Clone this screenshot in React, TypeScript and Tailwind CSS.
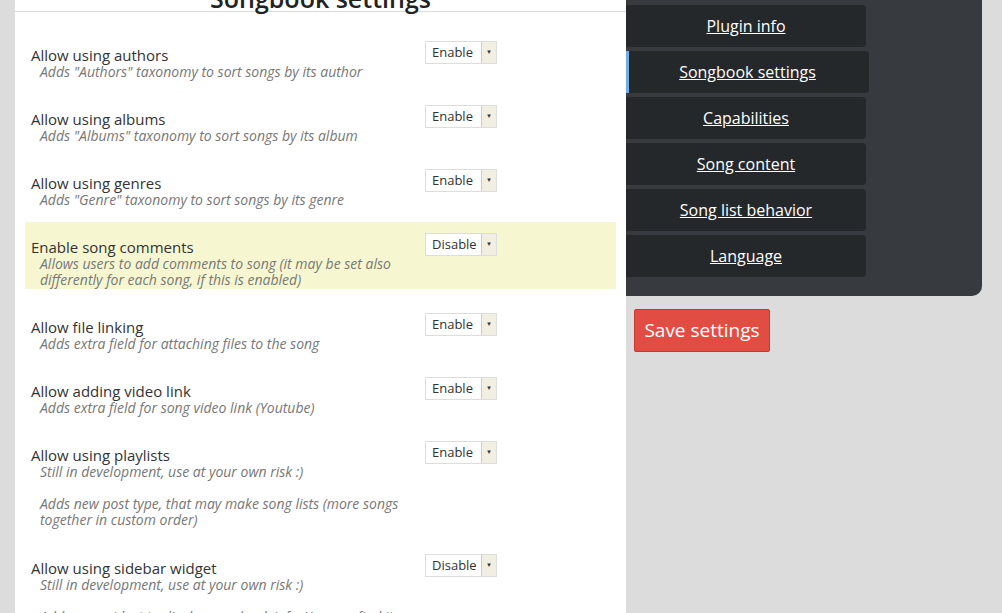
const rows: { title: string; desc: string[]; value: string; hl?: boolean; h: number }[] = [
  { title: "Allow using authors", desc: ['Adds "Authors" taxonomy to sort songs by its author'], value: "Enable", h: 64 },
  { title: "Allow using albums", desc: ['Adds "Albums" taxonomy to sort songs by its album'], value: "Enable", h: 64 },
  { title: "Allow using genres", desc: ['Adds "Genre" taxonomy to sort songs by its genre'], value: "Enable", h: 64 },
  {
    title: "Enable song comments",
    desc: ["Allows users to add comments to song (it may be set also differently for each song, if this is enabled)"],
    value: "Disable",
    hl: true,
    h: 67,
  },
  { title: "Allow file linking", desc: ["Adds extra field for attaching files to the song"], value: "Enable", h: 64 },
  { title: "Allow adding video link", desc: ["Adds extra field for song video link (Youtube)"], value: "Enable", h: 64 },
  {
    title: "Allow using playlists",
    desc: ["Still in development, use at your own risk :)", "Adds new post type, that may make song lists (more songs together in custom order)"],
    value: "Enable",
    h: 113,
  },
  {
    title: "Allow using sidebar widget",
    desc: ["Still in development, use at your own risk :)", "Adds new widget to display songbook info. You can find it"],
    value: "Disable",
    h: 113,
  },
];

const nav = ["Plugin info", "Songbook settings", "Capabilities", "Song content", "Song list behavior", "Language"];

function Select({ value }: { value: string }) {
  return (
    <div className="mt-[-6px] flex h-[23px] w-[72px] border border-[#ddd] bg-white text-[13px] text-[#333]">
      <div className="flex-1 pl-[6px] leading-[21px]">{value}</div>
      <div className="flex w-[15px] items-center justify-center border-l border-[#ccc] bg-[#f1efe2] text-[6px]">▼</div>
    </div>
  );
}

export default function App() {
  return (
    <div className="flex h-[613px] w-[1002px] overflow-hidden bg-[#dcdcdc]" style={{ fontFamily: '"Open Sans", sans-serif' }}>
      <div className="w-[15px] shrink-0" />
      <div className="w-[611px] shrink-0 bg-white">
        <div className="mt-[-14px] border-b border-[#ddd] text-center text-[25px] font-semibold leading-[25px] text-[#222]">
          Songbook settings
        </div>
        <div className="px-[10px] pt-[18px]">
          {rows.map((r) => (
            <div
              key={r.title}
              className={`flex px-[6px] pt-[17px] ${r.hl ? "mb-[13px] bg-[#f6f7d1]" : ""}`}
              style={{ height: r.h }}
            >
              <div className="w-[394px]">
                <div className="text-[15px] leading-[17px] text-[#333]">{r.title}</div>
                {r.desc.map((d, i) => (
                  <div key={i} className={`pl-[9px] text-[14px] italic leading-[16px] text-[#777] ${i > 0 ? "mt-[16px]" : ""}`}>
                    {d}
                  </div>
                ))}
              </div>
              <Select value={r.value} />
            </div>
          ))}
        </div>
      </div>
      <div className="flex flex-col">
        <div className="flex h-[296px] w-[356px] flex-col gap-[4px] rounded-br-[10px] bg-[#373b3f] pt-[5px]">
          {nav.map((n) => {
            const active = n === "Songbook settings";
            return (
              <div
                key={n}
                className={`flex h-[42px] items-center justify-center rounded-r-[4px] bg-[#25282b] text-[16px] font-medium text-white underline ${
                  active ? "w-[243px] border-l-[3px] border-[#72aee6] pr-[3px]" : "w-[240px]"
                }`}
              >
                {n}
              </div>
            );
          })}
        </div>
        <div className="ml-[8px] mt-[13px] flex h-[43px] w-[136px] items-center justify-center rounded-[2px] border border-[#c9372f] bg-[#e14d43] text-[19px] text-white">
          Save settings
        </div>
      </div>
    </div>
  );
}
